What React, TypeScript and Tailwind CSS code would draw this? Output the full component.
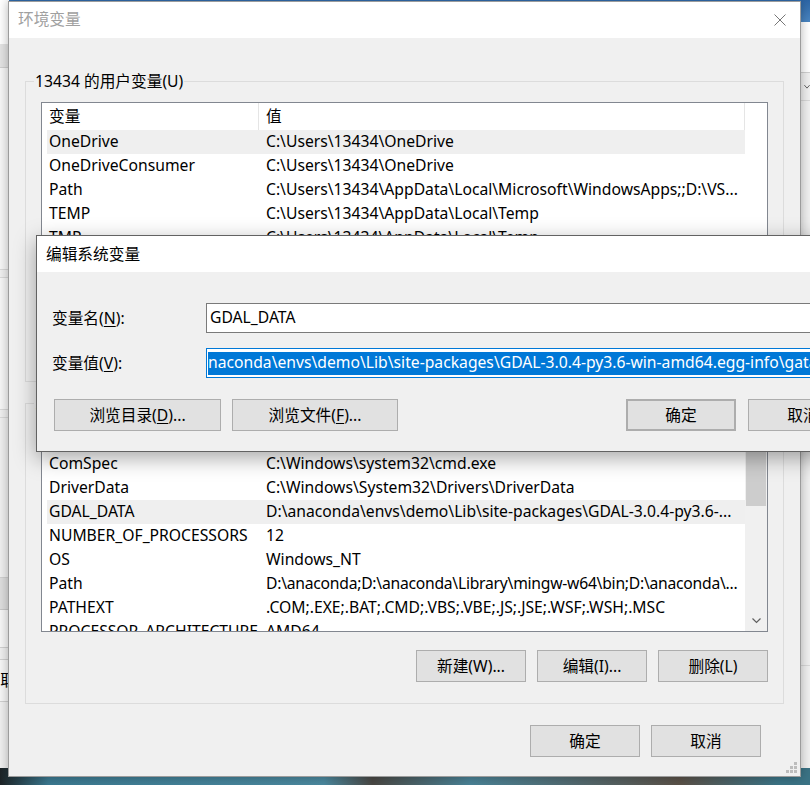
import type { ReactNode } from "react";

type Row = { name: string; value: string; active?: boolean; tight?: boolean };

const userRows: Row[] = [
  { name: "OneDrive", value: "C:\\Users\\13434\\OneDrive", active: true },
  { name: "OneDriveConsumer", value: "C:\\Users\\13434\\OneDrive" },
  { name: "Path", value: "C:\\Users\\13434\\AppData\\Local\\Microsoft\\WindowsApps;;D:\\VS..." },
  { name: "TEMP", value: "C:\\Users\\13434\\AppData\\Local\\Temp" },
  { name: "TMP", value: "C:\\Users\\13434\\AppData\\Local\\Temp" },
];

const systemRows: Row[] = [
  { name: "ComSpec", value: "C:\\Windows\\system32\\cmd.exe" },
  { name: "DriverData", value: "C:\\Windows\\System32\\Drivers\\DriverData" },
  { name: "GDAL_DATA", value: "D:\\anaconda\\envs\\demo\\Lib\\site-packages\\GDAL-3.0.4-py3.6-...", active: true },
  { name: "NUMBER_OF_PROCESSORS", value: "12" },
  { name: "OS", value: "Windows_NT" },
  { name: "Path", value: "D:\\anaconda;D:\\anaconda\\Library\\mingw-w64\\bin;D:\\anaconda\\...", tight: true },
  { name: "PATHEXT", value: ".COM;.EXE;.BAT;.CMD;.VBS;.VBE;.JS;.JSE;.WSF;.WSH;.MSC" },
  { name: "PROCESSOR_ARCHITECTURE", value: "AMD64" },
];

function Button({ children, className = "" }: { children: ReactNode; className?: string }) {
  return (
    <button className={`flex h-[32px] shrink-0 items-center justify-center border border-[#adadad] bg-[#e1e1e1] pt-[1px] text-[15.7px] text-black ${className}`}>
      {children}
    </button>
  );
}

function VarList({ rows, scroll }: { rows: Row[]; scroll?: boolean }) {
  return (
    <div className="flex h-[208px] overflow-hidden border border-[#828790] bg-white">
      <div className="min-w-0 flex-1 pl-[5px]">
        {/* header */}
        <div className="flex h-[27px] items-center">
          <div className="flex h-full w-[212px] shrink-0 items-center border-r border-[#e5e5e5] pl-[2px]">变量</div>
          <div className="flex h-full flex-1 items-center border-r border-[#e5e5e5] pl-[7px]">值</div>
        </div>
        {rows.map((r) => (
          <div key={r.name} className={`flex h-[24px] items-center whitespace-nowrap ${r.active ? "bg-[#efefef]" : ""}`}>
            <div className="w-[212px] shrink-0 overflow-hidden pl-[2px]">{r.name}</div>
            <div className={`w-0 flex-1 overflow-hidden pl-[7px] ${r.tight ? "tracking-[-0.25px]" : ""}`}>{r.value}</div>
          </div>
        ))}
      </div>
      {scroll ? (
        <div className="flex w-[22px] shrink-0 flex-col bg-[#f0f0f0] px-[1px]">
          <div className="h-[21px]" />
          <div className="h-[60px] bg-[#cdcdcd]" />
          <div className="flex-1" />
          <div className="flex h-[21px] items-center justify-center">
            <svg width="9" height="6" viewBox="0 0 9 6">
              <path d="M0.5 0.5 L4.5 4.5 L8.5 0.5" fill="none" stroke="#606060" strokeWidth="1.2" />
            </svg>
          </div>
        </div>
      ) : (
        <div className="w-[22px] shrink-0" />
      )}
    </div>
  );
}

function Group({ title, rows, scroll, buttons, className = "" }: { title: string; rows: Row[]; scroll?: boolean; buttons: string[]; className?: string }) {
  return (
    <fieldset className={`min-w-0 border border-[#dcdcdc] px-0 pt-[11px] ${className}`}>
      <legend className="ml-[8px] px-[1px] leading-[20px]">{title}</legend>
      <div className="mx-[15px]">
        <VarList rows={rows} scroll={scroll} />
        <div className="mt-[18px] flex justify-end gap-[11px]">
          {buttons.map((b) => (
            <Button key={b} className="w-[110px]">{b}</Button>
          ))}
        </div>
      </div>
    </fieldset>
  );
}

function MainWindow() {
  return (
    <div className="absolute left-[8px] top-[1px] flex h-[776px] w-[793px] flex-col border border-[#9c9c9c] bg-[#f0f0f0] shadow-[0_0_10px_rgba(0,0,0,0.3)]">
      <div className="flex h-[36px] shrink-0 items-center justify-between bg-white pl-[9px]">
        <span className="text-[#a0a0a0]">环境变量</span>
        <div className="flex h-full w-[40px] items-center justify-center">
          <svg width="12" height="12" viewBox="0 0 12 12">
            <path d="M0.5 0.5 L11.5 11.5 M11.5 0.5 L0.5 11.5" stroke="#777" strokeWidth="1" />
          </svg>
        </div>
      </div>
      <div className="flex flex-1 flex-col px-[16px]">
        <Group className="mt-[33px] pb-[21px]" title="13434 的用户变量(U)" rows={userRows} buttons={["新建(N)...", "编辑(E)...", "删除(D)"]} />
        <Group className="mt-[11px] pb-[21px]" title="系统变量(S)" rows={systemRows} scroll buttons={["新建(W)...", "编辑(I)...", "删除(L)"]} />
        <div className="mt-[21px] flex justify-end gap-[11px] pr-[23px]">
          <Button className="w-[110px]">确定</Button>
          <Button className="w-[110px]">取消</Button>
        </div>
      </div>
      {/* size grip */}
      <svg className="absolute bottom-[3px] right-[3px]" width="12" height="12" viewBox="0 0 12 12" fill="#bdbdbd">
        <rect x="9" y="1" width="3" height="3" />
        <rect x="5" y="5" width="3" height="3" />
        <rect x="9" y="5" width="3" height="3" />
        <rect x="1" y="9" width="3" height="3" />
        <rect x="5" y="9" width="3" height="3" />
        <rect x="9" y="9" width="3" height="3" />
      </svg>
    </div>
  );
}

function EditDialog() {
  return (
    <div className="absolute left-[36px] top-[235px] flex h-[217px] w-[838px] flex-col border border-[#626262] bg-[#f0f0f0] shadow-[0_6px_20px_rgba(0,0,0,0.35)]">
      <div className="flex h-[36px] shrink-0 items-center bg-white pl-[9px] pt-[2px]">编辑系统变量</div>
      <div className="flex flex-col px-[15px] pt-[31px]">
        <div className="flex h-[30px] items-center">
          <span className="w-[154px] shrink-0 pt-[1px]">
            变量名(<span className="underline underline-offset-2">N</span>):
          </span>
          <div className="flex h-full flex-1 items-center border border-[#7a7a7a] bg-white pl-[3px] whitespace-nowrap">GDAL_DATA</div>
        </div>
        <div className="mt-[15px] flex h-[30px] items-center">
          <span className="w-[154px] shrink-0 pt-[1px]">
            变量值(<span className="underline underline-offset-2">V</span>):
          </span>
          <div className="flex h-full min-w-0 flex-1 items-center overflow-hidden border border-[#0078d7] bg-white pl-[1px] whitespace-nowrap">
            <span className="flex h-[23px] items-center bg-[#0078d7] pr-[40px] text-white">
              naconda\envs\demo\Lib\site-packages\GDAL-3.0.4-py3.6-win-amd64.egg-info\gata
            </span>
          </div>
        </div>
        <div className="mt-[21px] flex items-center pl-[2px]">
          <Button className="w-[167px]">
            浏览目录(<span className="underline underline-offset-2">D</span>)...
          </Button>
          <Button className="ml-[11px] w-[166px]">
            浏览文件(<span className="underline underline-offset-2">F</span>)...
          </Button>
          <div className="flex-1" />
          <Button className="w-[110px] border-2 border-[#0078d7]">确定</Button>
          <Button className="ml-[12px] w-[110px]">取消</Button>
        </div>
      </div>
    </div>
  );
}

export default function App() {
  return (
    <div className="relative h-[785px] w-[810px] overflow-hidden bg-[linear-gradient(90deg,#1d2326_0%,#3b7990_6%,#4b889e_40%,#4a4844_46%,#4a8296_58%,#5a5148_84%,#3b7385_96%)] font-['Noto_Sans','Noto_Sans_CJK_SC',sans-serif] text-[15.7px] text-black">
      {/* desktop top edge */}
      <div className="absolute left-[8px] top-0 h-[2px] w-[802px] bg-[#3270b4]" />
      <div className="absolute right-0 top-0 h-[22px] w-[9px] bg-[linear-gradient(180deg,#2d66a6,#4a86c2)]" />

      {/* window behind, left edge */}
      <div className="absolute left-0 top-0 flex h-[768px] w-[9px] flex-col bg-[#f0f0f0]">
        <div className="h-[44px] shrink-0 bg-white" />
        <div className="h-[24px] shrink-0 border-b border-[#cfcfcf] bg-[#e4e4e4]" />
        <div className="h-[202px] shrink-0 border-b border-[#d9d9d9] bg-[#f7f7f7]" />
        <div className="h-[8px] shrink-0 border-b border-[#d9d9d9]" />
        <div className="h-[132px] shrink-0 border-b border-[#d9d9d9] bg-[#f7f7f7]" />
        <div className="h-[8px] shrink-0 border-b border-[#d9d9d9]" />
        <div className="h-[160px] shrink-0 border-b border-[#d0d0d0]" />
        <div className="h-[32px] shrink-0 border-b border-[#c8c8c8] bg-[#dedede]" />
        <div className="h-[38px] shrink-0 border-b border-[#d0d0d0] bg-[#f7f7f7]" />
        <div className="h-[12px] shrink-0 border-b border-[#d0d0d0]" />
        <div className="flex h-[42px] shrink-0 items-center justify-end overflow-hidden border-b border-[#d0d0d0] bg-[#f7f7f7]">
          <span className="-mr-[7px]">取</span>
        </div>
      </div>

      {/* window behind, right edge */}
      <div className="absolute right-0 top-[22px] flex h-[746px] w-[9px] flex-col bg-[#f0f0f0]">
        <div className="h-[51px] shrink-0 border-b border-[#d0d0d0] bg-white" />
        <div className="flex h-[27px] shrink-0 items-center pl-[3px]">
          <svg width="8" height="6" viewBox="0 0 8 6">
            <path d="M0.5 0.5 L4 4.5 L7.5 0.5" fill="none" stroke="#555" strokeWidth="1.2" />
          </svg>
        </div>
        <div className="h-[566px] shrink-0 border-t border-b border-[#d8d8d8]" />
      </div>

      <MainWindow />
      <EditDialog />
    </div>
  );
}
